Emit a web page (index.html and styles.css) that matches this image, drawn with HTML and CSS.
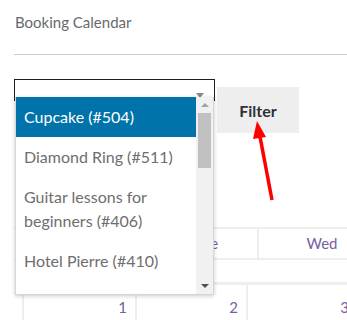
FILE: index.html
```html
<!DOCTYPE html>
<html>
<head>
<meta charset="utf-8">
<link rel="stylesheet" href="styles.css">
</head>
<body>
<div class="page">
  <h1 class="title">Booking Calendar</h1>
  <div class="rule"></div>
  <div class="controls">
    <div class="select-wrap">
      <div class="select"><span class="select-arrow"></span></div>
      <div class="dropdown">
        <ul class="options">
          <li class="option selected">Cupcake (#504)</li>
          <li class="option">Diamond Ring (#511)</li>
          <li class="option">Guitar lessons for beginners (#406)</li>
          <li class="option">Hotel Pierre (#410)</li>
          <li class="option">Hot Air and Sales (#412)</li>
        </ul>
        <div class="scrollbar">
          <span class="sb-up"></span>
          <span class="sb-thumb"></span>
          <span class="sb-space"></span>
          <span class="sb-down"></span>
        </div>
      </div>
    </div>
    <button class="filter">Filter</button>
  </div>
  <div class="calendar">
    <div class="cal-head">
      <div class="head-cell c1">Mon</div>
      <div class="head-cell c2">Tue</div>
      <div class="head-cell c3">Wed</div>
    </div>
    <div class="cal-gap"></div>
    <div class="cal-row">
      <div class="day d1">1</div>
      <div class="day d2">2</div>
      <div class="day d3">3</div>
    </div>
  </div>
  <svg class="annot" width="347" height="320" viewBox="0 0 347 320">
    <line x1="272" y1="200" x2="259.5" y2="134" stroke="#ff0000" stroke-width="3.5"/>
    <polygon points="257,121 253,139 266,137" fill="#ff0000"/>
  </svg>
</div>
</body>
</html>
```

FILE: styles.css
```css
html, body {
  margin: 0;
  padding: 0;
  background: #ffffff;
}
body {
  font-family: Lato, "Liberation Sans", sans-serif;
  width: 347px;
  height: 320px;
  overflow: hidden;
}
.page {
  position: relative;
  width: 347px;
  height: 320px;
  overflow: hidden;
}
.title {
  margin: 0;
  padding: 12px 15px 0;
  font-size: 15px;
  line-height: 20px;
  font-weight: 400;
  color: #666a6e;
}
.rule {
  margin: 22px 0 0 14px;
  border-top: 1px solid #cccccc;
}
.controls {
  display: flex;
  align-items: flex-start;
  margin: 24px 0 0 14px;
}
.select-wrap {
  position: relative;
  width: 201px;
}
.select {
  box-sizing: border-box;
  height: 22px;
  border: 1px solid #1e1e1e;
  background: #fff;
  position: relative;
}
.select-arrow {
  position: absolute;
  right: 10px;
  top: 13px;
  width: 0;
  height: 0;
  border-left: 4px solid transparent;
  border-right: 4px solid transparent;
  border-top: 5px solid #888;
}
.dropdown {
  position: absolute;
  top: 18px;
  left: 1px;
  width: 199px;
  height: 198px;
  box-sizing: border-box;
  border: 1px solid #d6d6d6;
  border-top: none;
  background: #fff;
  box-shadow: 0 1px 4px rgba(0, 0, 0, 0.22);
  display: flex;
  overflow: hidden;
  z-index: 2;
}
.options {
  list-style: none;
  margin: 0;
  padding: 0;
  flex: 1;
  overflow: hidden;
}
.option {
  padding: 8px 8px;
  font-size: 16px;
  line-height: 24px;
  color: #6e6e6e;
}
.option.selected {
  background: #0073aa;
  color: #ffffff;
}
.scrollbar {
  width: 17px;
  flex: none;
  background: #f1f1f1;
  display: flex;
  flex-direction: column;
  align-items: center;
}
.sb-up {
  margin-top: 6px;
  width: 0;
  height: 0;
  border-left: 4px solid transparent;
  border-right: 4px solid transparent;
  border-bottom: 4px solid #a3a3a3;
}
.sb-thumb {
  margin-top: 6px;
  width: 13px;
  height: 55px;
  background: #c1c1c1;
}
.sb-space {
  flex: 1;
}
.sb-down {
  margin-bottom: 6px;
  width: 0;
  height: 0;
  border-left: 4px solid transparent;
  border-right: 4px solid transparent;
  border-top: 4px solid #505050;
}
.filter {
  margin: 8px 0 0 2px;
  width: 82px;
  height: 46px;
  border: none;
  background: #eeeeee;
  font-family: Lato, "Liberation Sans", sans-serif;
  font-size: 16px;
  font-weight: 700;
  color: #2c3338;
  padding: 0;
}
.calendar {
  margin-top: 94px;
}
.cal-head {
  display: flex;
  border-top: 2px solid #eeeeee;
  border-bottom: 2px solid #eeeeee;
  margin-left: 14px;
  height: 29px;
}
.head-cell {
  flex: none;
  box-sizing: border-box;
  font-size: 15px;
  line-height: 29px;
  color: #76609e;
  text-align: center;
  border-right: 2px solid #eeeeee;
}
.head-cell.c1 { width: 134px; }
.head-cell.c2 { width: 111px; padding-left: 8px; }
.head-cell.c3 { width: 126px; border-right: none; }
.cal-gap {
  height: 22px;
}
.cal-row {
  display: flex;
  border-top: 3px solid #eeeeee;
  margin-left: 22px;
}
.day {
  flex: none;
  box-sizing: border-box;
  border-left: 2px solid #eeeeee;
  padding: 12px 8px 20px 0;
  font-size: 15px;
  line-height: 20px;
  color: #76609e;
  text-align: right;
}
.day.d1 { width: 113px; }
.day.d2 { width: 111px; }
.day.d3 { width: 111px; }
.annot {
  position: absolute;
  left: 0;
  top: 0;
  pointer-events: none;
  z-index: 3;
}
```
